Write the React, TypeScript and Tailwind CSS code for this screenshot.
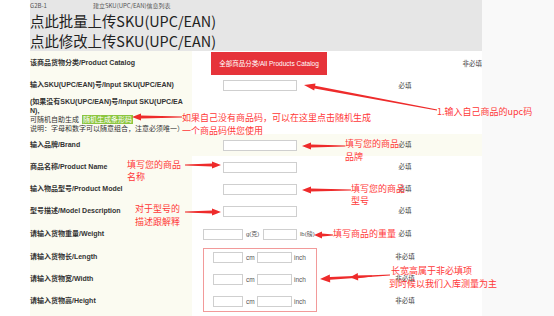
import React from "react";

type Pt = [number, number];

function arrowPoints(tail: Pt, tip: Pt, headLen = 9, headHalf = 3.5, t0 = 0.5, t1 = 1.4) {
  const dx = tip[0] - tail[0];
  const dy = tip[1] - tail[1];
  const len = Math.hypot(dx, dy);
  const ux = dx / len;
  const uy = dy / len;
  const nx = -uy;
  const ny = ux;
  const bx = tip[0] - ux * headLen;
  const by = tip[1] - uy * headLen;
  const pts: Pt[] = [
    [tail[0] + nx * t0, tail[1] + ny * t0],
    [bx + nx * t1, by + ny * t1],
    [bx + nx * headHalf, by + ny * headHalf],
    tip,
    [bx - nx * headHalf, by - ny * headHalf],
    [bx - nx * t1, by - ny * t1],
    [tail[0] - nx * t0, tail[1] - ny * t0],
  ];
  return pts.map((p) => `${p[0].toFixed(1)},${p[1].toFixed(1)}`).join(" ");
}

const arrows: { tail: Pt; tip: Pt; hl?: number; hh?: number }[] = [
  { tail: [437, 110], tip: [304, 85], hl: 11, hh: 3.5 },
  { tail: [182, 117], tip: [132, 117] },
  { tail: [345, 146], tip: [302, 146] },
  { tail: [185, 165], tip: [221, 165] },
  { tail: [351, 190], tip: [302, 190] },
  { tail: [185, 212], tip: [221, 212] },
  { tail: [333, 235], tip: [314, 235], hl: 8 },
  { tail: [390, 275], tip: [320, 279], hl: 10, hh: 4 },
  { tail: [372, 276], tip: [350, 277.3], hl: 8, hh: 3.8 },
];

function Annotations() {
  const txt = "absolute text-[9px] leading-[12px] text-[#ff3838] whitespace-nowrap font-['Noto_Sans_CJK_SC',sans-serif]";
  return (
    <>
      <svg className="absolute left-0 top-0 pointer-events-none" width={554} height={316}>
        {arrows.map((a, i) => (
          <polygon key={i} points={arrowPoints(a.tail, a.tip, a.hl ?? 9, a.hh ?? 3.5)} fill="#ee2b2b" />
        ))}
      </svg>
      <div className={`${txt} left-[182px] top-[112px]`}>如果自己没有商品码，可以在这里点击随机生成</div>
      <div className={`${txt} left-[182px] top-[125px]`}>一个商品码供您使用</div>
      <div className={`${txt} left-[437px] top-[106px]`}>1.输入自己商品的upc码</div>
      <div className={`${txt} left-[345px] top-[138px]`}>填写您的商品</div>
      <div className={`${txt} left-[345px] top-[151px]`}>品牌</div>
      <div className={`${txt} left-[127px] top-[159px]`}>填写您的商品</div>
      <div className={`${txt} left-[127px] top-[171px]`}>名称</div>
      <div className={`${txt} left-[351px] top-[183px]`}>填写您的商品</div>
      <div className={`${txt} left-[351px] top-[195px]`}>型号</div>
      <div className={`${txt} left-[135px] top-[203px]`}>对于型号的</div>
      <div className={`${txt} left-[135px] top-[216px]`}>描述跟解释</div>
      <div className={`${txt} left-[333px] top-[228px]`}>填写商品的重量</div>
      <div className={`${txt} left-[391px] top-[265px]`}>长宽高属于非必填项</div>
      <div className={`${txt} left-[389px] top-[278px]`}>到时候以我们入库测量为主</div>
    </>
  );
}

const labelCls = "w-[162px] shrink-0 h-full bg-[#fbfbf1] flex items-center text-[7px] font-bold whitespace-nowrap text-[#333]";
const inputCls = "h-[11px] border border-[#cfcfcf] bg-white";

function SimpleRow({ label, req = "必填", highlight = false }: { label: string; req?: string; highlight?: boolean }) {
  return (
    <div className={`h-[22px] flex items-center ${highlight ? "bg-[#fbfbf1]" : ""}`}>
      <div className={labelCls}>{label}</div>
      <div className="w-[136px] shrink-0 flex justify-center">
        <div className={`${inputCls} w-[74px]`} />
      </div>
      <div className="flex-1 flex justify-center text-[6.5px] text-[#444]">{req}</div>
    </div>
  );
}

export default function App() {
  return (
    <div className="relative w-[554px] h-[316px] overflow-hidden bg-white flex font-['Liberation_Sans','Noto_Sans_CJK_SC',sans-serif] text-[#333]">
      <div className="w-[30px] shrink-0 bg-white" />
      <div className="w-[452px] shrink-0 flex flex-col">
        {/* header */}
        <div className="h-[51px] shrink-0 bg-[#e6e6e6] flex flex-col">
          <div className="h-[11px] flex items-center text-[6px] leading-none text-[#555] font-['Noto_Sans_CJK_SC',sans-serif]">
            <span className="w-[63px]">G2B-1</span>
            <span>建立SKU(UPC/EAN)信息列表</span>
          </div>
          <div className="h-[20px] flex items-center text-[14.4px] leading-none text-[#222] font-['Noto_Sans_CJK_SC',sans-serif]">
            点此批量上传SKU(UPC/EAN)
          </div>
          <div className="h-[20px] flex items-center text-[14.4px] leading-none text-[#222] font-['Noto_Sans_CJK_SC',sans-serif]">
            点此修改上传SKU(UPC/EAN)
          </div>
        </div>

        {/* catalog */}
        <div className="h-[25px] shrink-0 flex items-center">
          <div className={labelCls}>该商品货物分类/Product Catalog</div>
          <div className="w-[136px] shrink-0 h-full flex justify-center items-center">
            <div className="w-[116px] h-[23px] ml-[18px] bg-[#e6333a] text-white text-[6.5px] flex items-center justify-center whitespace-nowrap">
              全部商品分类/All Products Catalog
            </div>
          </div>
          <div className="flex-1 flex justify-end text-[6.5px] text-[#444]">非必填</div>
        </div>

        {/* sku */}
        <div className="h-[19px] shrink-0 flex items-center">
          <div className={labelCls}>输入SKU(UPC/EAN)号/Input SKU(UPC/EAN)</div>
          <div className="w-[136px] shrink-0 flex justify-center">
            <div className={`${inputCls} w-[74px]`} />
          </div>
          <div className="flex-1 flex justify-center text-[6.5px] text-[#444]">必填</div>
        </div>

        {/* description block */}
        <div className="h-[39px] shrink-0 flex">
          <div className="w-[162px] shrink-0 h-full bg-[#fbfbf1] pt-[2px] flex flex-col text-[7px] leading-[9px] whitespace-nowrap text-[#333]">
            <div className="font-bold">(如果没有SKU(UPC/EAN)号/Input SKU(UPC/EA</div>
            <div className="font-bold">N),</div>
            <div className="flex items-center">
              <span>可随机自助生成</span>
              <span className="ml-[3px] px-[1px] h-[9px] leading-[9px] bg-[#8cc63f] text-white">随机生成条形码</span>
            </div>
            <div>说明：字母和数字可以随意组合，注意必须唯一）</div>
          </div>
          <div className="flex-1" />
        </div>

        <SimpleRow label="输入品牌/Brand" highlight />
        <SimpleRow label="商品名称/Product Name" />
        <SimpleRow label="输入物品型号/Product Model" />
        <SimpleRow label="型号描述/Model Description" />

        {/* weight */}
        <div className="h-[24px] shrink-0 flex items-center">
          <div className={labelCls}>请输入货物重量/Weight</div>
          <div className="w-[136px] shrink-0 flex items-center pl-[11px] text-[6px] text-[#555] whitespace-nowrap">
            <div className={`${inputCls} w-[40px]`} />
            <span className="ml-[3px] w-[17px]">g(克)</span>
            <div className={`${inputCls} w-[34px]`} />
            <span className="ml-[3px]">lb(磅)</span>
          </div>
          <div className="flex-1 flex justify-center text-[6.5px] text-[#444]">必填</div>
        </div>

        {/* dimensions */}
        <div className="h-[66px] shrink-0 flex">
          <div className="w-[162px] shrink-0 h-full bg-[#fbfbf1] flex flex-col text-[7px] font-bold whitespace-nowrap">
            <div className="h-[22px] flex items-center">请输入货物长/Length</div>
            <div className="h-[22px] flex items-center">请输入货物宽/Width</div>
            <div className="h-[22px] flex items-center">请输入货物高/Height</div>
          </div>
          <div className="w-[136px] shrink-0 pl-[11px] pt-[2px]">
            <div className="w-[114px] h-[64px] border border-[#f29a9a] pl-[9px] pt-[3px] flex flex-col gap-[11px] text-[6.5px] text-[#555]">
              {[0, 1, 2].map((i) => (
                <div key={i} className="h-[11px] flex items-center whitespace-nowrap">
                  <div className={`${inputCls} w-[30px]`} />
                  <span className="ml-[3px] w-[11px]">cm</span>
                  <div className={`${inputCls} w-[35px]`} />
                  <span className="ml-[2px]">inch</span>
                </div>
              ))}
            </div>
          </div>
          <div className="flex-1 flex flex-col text-[6.5px] text-[#444]">
            {[0, 1, 2].map((i) => (
              <div key={i} className="h-[22px] flex items-center justify-center">非必填</div>
            ))}
          </div>
        </div>

        <div className="flex-1 flex">
          <div className="w-[162px] bg-[#fbfbf1]" />
        </div>
      </div>
      <div className="flex-1 bg-[#f9f9f9]" />
      <Annotations />
    </div>
  );
}
